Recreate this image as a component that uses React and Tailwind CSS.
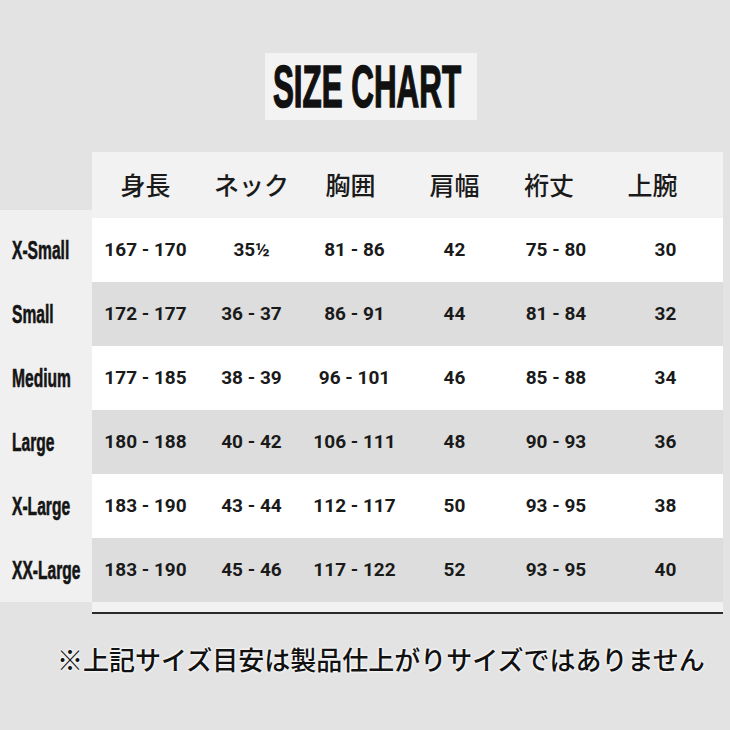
import React from "react";

const heads = ["身長", "ネック", "胸囲", "肩幅", "裄丈", "上腕"];

const rows = [
    { size: "X-Small", vals: ["167 - 170", "35½", "81 - 86", "42", "75 - 80", "30"] },
    { size: "Small", vals: ["172 - 177", "36 - 37", "86 - 91", "44", "81 - 84", "32"] },
    { size: "Medium", vals: ["177 - 185", "38 - 39", "96 - 101", "46", "85 - 88", "34"] },
    { size: "Large", vals: ["180 - 188", "40 - 42", "106 - 111", "48", "90 - 93", "36"] },
    { size: "X-Large", vals: ["183 - 190", "43 - 44", "112 - 117", "50", "93 - 95", "38"] },
    { size: "XX-Large", vals: ["183 - 190", "45 - 46", "117 - 122", "52", "93 - 95", "40"] },
];

const cols = "grid grid-cols-[107px_105px_101px_99px_104px_115px]";
const headPad = ["", "", "pr-[8px]", "", "pr-[14px]", "pr-[26px]"];

export default function App() {
    return (
        <div className="w-[730px] h-[730px] bg-[#e3e3e3] flex flex-col overflow-hidden">
            {/* title */}
            <div className="mt-[53px] ml-[265px] w-[212px] h-[67px] bg-[#f3f3f3] flex items-center justify-center pr-[8px]">
                <span
                    className="inline-block scale-x-[0.55] scale-y-[1.04] text-[57px] leading-none font-bold text-[#111] whitespace-nowrap [-webkit-text-stroke:1.5px_#111]"
                    style={{ fontFamily: '"Liberation Sans", Arial, sans-serif' }}
                >
                    SIZE CHART
                </span>
            </div>

            {/* table */}
            <div className="mt-[32px] flex flex-col">
                <div className="flex h-[66px]">
                    <div className="w-[92px] flex flex-col justify-end">
                        <div className="h-[8px] bg-[#f0f0f0]"></div>
                    </div>
                    <div
                        className={`${cols} w-[631px] bg-[#f2f2f2] items-center text-[25px] font-medium text-[#1a1a1a]`}
                        style={{ fontFamily: '"Noto Sans CJK JP", sans-serif' }}
                    >
                        {heads.map((h, i) => (
                            <div key={h} className={`text-center ${headPad[i]}`}>
                                {h}
                            </div>
                        ))}
                    </div>
                </div>

                {rows.map((r, idx) => (
                    <div key={r.size} className="flex h-[64px]">
                        <div className="w-[92px] bg-[#f0f0f0] flex items-center pl-[12px]">
                            <span
                                className="inline-block origin-left scale-x-[0.6] text-[26px] font-bold text-[#151515] whitespace-nowrap [-webkit-text-stroke:0.6px_#151515]"
                                style={{ fontFamily: '"Liberation Sans", Arial, sans-serif' }}
                            >
                                {r.size}
                            </span>
                        </div>
                        <div
                            className={`${cols} w-[631px] items-center text-[19px] font-bold text-[#1a1a1a] ${idx % 2 === 0 ? "bg-white" : "bg-[#dddddd]"}`}
                            style={{ fontFamily: 'Roboto, "Liberation Sans", sans-serif' }}
                        >
                            {r.vals.map((v, i) => (
                                <div key={i} className="text-center whitespace-nowrap">
                                    {v}
                                </div>
                            ))}
                        </div>
                    </div>
                ))}

                <div className="flex h-[12px]">
                    <div className="w-[92px]"></div>
                    <div className="w-[631px] bg-[#f2f2f2] border-b-2 border-[#2a2a2a]"></div>
                </div>
            </div>

            {/* note */}
            <div
                className="mt-[27px] pl-[57px] text-[26px] leading-[36px] font-medium text-[#111] whitespace-nowrap"
                style={{ fontFamily: '"Noto Sans CJK JP", sans-serif', textShadow: "0 0 3px #fff, 0 0 3px #fff" }}
            >
                ※上記サイズ目安は製品仕上がりサイズではありません
            </div>
        </div>
    );
}
